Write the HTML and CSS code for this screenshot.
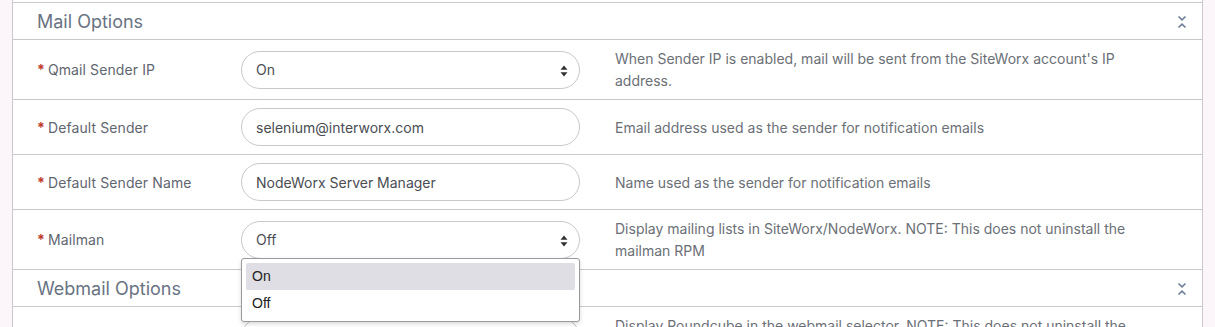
FILE: index.html
```html
<!DOCTYPE html>
<html lang="en">
<head>
    <meta charset="UTF-8">
    <meta name="viewport" content="width=device-width, initial-scale=1.0">
    <title>Mail Options</title>
    <link rel="stylesheet" href="styles.css">
</head>
<body>
    <div class="panel">
        <div class="section-head">
            <h3>Mail Options</h3>
            <svg class="collapse" width="10" height="14" viewBox="0 0 10 14">
                <path d="M1.5 1.5 L5 4.8 L8.5 1.5" />
                <path d="M1.5 12.5 L5 9.2 L8.5 12.5" />
            </svg>
        </div>

        <div class="row">
            <label class="label"><span class="req">*</span>Qmail Sender IP</label>
            <div class="field">
                <div class="select">On
                    <svg class="sort" width="8" height="12" viewBox="0 0 8 12"><path d="M4 0.5 L7.5 4.8 H0.5 Z M4 11.5 L7.5 7.2 H0.5 Z" /></svg>
                </div>
            </div>
            <p class="help">When Sender IP is enabled, mail will be sent from the SiteWorx account's IP address.</p>
        </div>

        <div class="row">
            <label class="label"><span class="req">*</span>Default Sender</label>
            <div class="field">
                <input type="text" value="selenium@interworx.com">
            </div>
            <p class="help">Email address used as the sender for notification emails</p>
        </div>

        <div class="row">
            <label class="label"><span class="req">*</span>Default Sender Name</label>
            <div class="field">
                <input type="text" value="NodeWorx Server Manager">
            </div>
            <p class="help">Name used as the sender for notification emails</p>
        </div>

        <div class="row">
            <label class="label"><span class="req">*</span>Mailman</label>
            <div class="field">
                <div class="select">Off
                    <svg class="sort" width="8" height="12" viewBox="0 0 8 12"><path d="M4 0.5 L7.5 4.8 H0.5 Z M4 11.5 L7.5 7.2 H0.5 Z" /></svg>
                </div>
                <!-- open option list -->
                <ul class="dropdown">
                    <li class="active">On</li>
                    <li>Off</li>
                </ul>
            </div>
            <p class="help">Display mailing lists in SiteWorx/NodeWorx. NOTE: This does not uninstall the mailman RPM</p>
        </div>

        <div class="section-head">
            <h3>Webmail Options</h3>
            <svg class="collapse" width="10" height="14" viewBox="0 0 10 14">
                <path d="M1.5 1.5 L5 4.8 L8.5 1.5" />
                <path d="M1.5 12.5 L5 9.2 L8.5 12.5" />
            </svg>
        </div>

        <div class="row">
            <label class="label"><span class="req">*</span>Roundcube</label>
            <div class="field">
                <div class="select">On
                    <svg class="sort" width="8" height="12" viewBox="0 0 8 12"><path d="M4 0.5 L7.5 4.8 H0.5 Z M4 11.5 L7.5 7.2 H0.5 Z" /></svg>
                </div>
            </div>
            <p class="help">Display Roundcube in the webmail selector. NOTE: This does not uninstall the roundcube RPM</p>
        </div>
    </div>
</body>
</html>
```

FILE: styles.css
```css
body {
    margin: 0;
    padding: 0 12px;
    background-color: #fcf6fb;
    font-family: 'Inter', 'Liberation Sans', sans-serif;
    font-size: 14px;
    overflow: hidden;
}

.panel {
    padding-top: 2px;
    background-color: #fff;
    border-left: 1px solid #c9c8cd;
    border-right: 1px solid #c9c8cd;
    width: 1189px;
}

.section-head {
    display: flex;
    align-items: center;
    justify-content: space-between;
    height: 36px;
    padding: 0 15px 0 24px;
    border-top: 1px solid #c9c8cd;
    border-bottom: 1px solid #c9c8cd;
}

.row + .section-head {
    border-top: none;
}

.section-head h3 {
    margin: 0;
    font-size: 18px;
    font-weight: 400;
    color: #697383;
}

.collapse {
    margin-top: 1px;
}

.collapse path {
    fill: none;
    stroke: #6d7f98;
    stroke-width: 1.6;
}

.row {
    display: grid;
    grid-template-columns: 204px 339px 1fr;
    align-items: center;
    padding: 8px 30px 8px 24px;
    border-bottom: 1px solid #c9c8cd;
    min-height: 38px;
}

.label {
    color: #5f6670;
    letter-spacing: 0.1px;
}

.req {
    color: #c0392b;
    font-weight: 700;
    margin-right: 3px;
}

.field {
    position: relative;
}

.select,
.field input {
    box-sizing: border-box;
    width: 100%;
    height: 38px;
    padding: 0 14px;
    border: 1px solid #c9c9cc;
    border-radius: 19px;
    background-color: #fff;
    font-family: inherit;
    font-size: 14px;
    color: #4a4d53;
    display: flex;
    align-items: center;
}

.select {
    position: relative;
}

.sort {
    position: absolute;
    right: 11px;
    top: 13px;
}

.sort path {
    fill: #333;
}

.help {
    margin: 0 0 -1px;
    padding: 0 10px 0 35px;
    line-height: 22px;
    color: #6b6f76;
}

.dropdown {
    position: absolute;
    top: 37px;
    left: 0;
    right: 0;
    z-index: 5;
    margin: 0;
    padding: 4px 4px;
    list-style: none;
    background-color: #fff;
    border: 1px solid #9a9a9e;
    border-radius: 3px;
    box-shadow: 0 2px 4px rgba(0, 0, 0, 0.15);
    font-family: 'Liberation Sans', Arial, sans-serif;
    font-size: 14px;
    color: #222;
}

.dropdown li {
    height: 27px;
    line-height: 27px;
    padding: 0 6px;
    border-radius: 2px;
}

.dropdown li.active {
    background-color: #dfdee4;
}
```
